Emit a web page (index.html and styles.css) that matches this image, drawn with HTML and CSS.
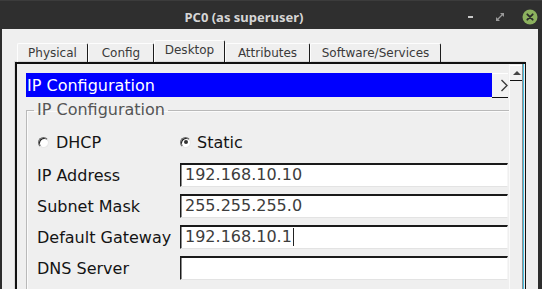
FILE: index.html
```html
<!DOCTYPE html>
<html lang="en">
<head>
    <meta charset="UTF-8">
    <title>PC0 (as superuser)</title>
    <link rel="stylesheet" href="styles.css">
</head>
<body>
    <div class="titlebar">
        <div class="title">PC0 (as superuser)</div>
        <div class="controls">
            <span class="min"></span>
            <svg class="max" width="8" height="8" viewBox="0 0 8 8">
                <path d="M4 0H8V4Z M0 4V8H4Z" fill="#9a9a9a"/>
                <path d="M1 7L7 1" stroke="#9a9a9a" stroke-width="1.2"/>
            </svg>
            <span class="close">
                <svg width="16" height="16" viewBox="0 0 16 16">
                    <circle cx="8" cy="8" r="7.5" fill="#8cb15e"/>
                    <path d="M5.3 5.3L10.7 10.7M10.7 5.3L5.3 10.7" stroke="#2a2a2a" stroke-width="1.8" stroke-linecap="round"/>
                </svg>
            </span>
        </div>
    </div>

    <div class="window">
        <div class="tabs">
            <div class="tab w-physical">Physical</div>
            <div class="tab w-config">Config</div>
            <div class="tab w-desktop active">Desktop</div>
            <div class="tab w-attr">Attributes</div>
            <div class="tab w-soft">Software/Services</div>
        </div>

        <div class="panel">
            <div class="view">
                <div class="bar-row">
                    <div class="bar">IP Configuration</div>
                    <div class="more">
                        <svg width="16" height="24" viewBox="0 0 16 24">
                            <path d="M9.5 7L15 12.5L9.5 18" fill="none" stroke="#3b3b3b" stroke-width="1.4"/>
                        </svg>
                    </div>
                </div>

                <fieldset class="group">
                    <legend>IP Configuration</legend>
                    <div class="form">
                        <label class="opt"><span class="radio"></span>DHCP</label>
                        <label class="opt"><span class="radio on"></span>Static</label>

                        <label>IP Address</label>
                        <div class="field">192.168.10.10</div>

                        <label>Subnet Mask</label>
                        <div class="field">255.255.255.0</div>

                        <label>Default Gateway</label>
                        <div class="field">192.168.10.1<span class="caret"></span></div>

                        <label>DNS Server</label>
                        <div class="field"></div>
                    </div>
                </fieldset>
            </div>
            <div class="scrollbar">
                <div class="up"></div>
            </div>
        </div>
    </div>
</body>
</html>
```

FILE: styles.css
```css
*{
    margin: 0;
    box-sizing: border-box;
}
html, body{
    height: 289px;
    overflow: hidden;
}
body{
    background-color: #2d2d2d;
    font-family: "DejaVu Sans", sans-serif;
}

/* window title */
.titlebar{
    height: 29px;
    display: flex;
    align-items: center;
    background-color: #2f2f2f;
    border-top: 1px solid #3c3c3c;
}
.title{
    flex: 1;
    padding-left: 20px;
    padding-top: 3px;
    text-align: center;
    font-family: "Noto Sans", sans-serif;
    font-weight: bold;
    font-size: 13px;
    color: #d6d6d6;
}
.controls{
    display: flex;
    align-items: center;
    padding-top: 3px;
    padding-right: 4px;
}
.min{
    width: 5px;
    height: 2px;
    background-color: #c8c8c8;
    margin-right: 23px;
}
.max{
    display: block;
    margin-right: 18px;
}
.close svg{
    display: block;
}

/* window body */
.window{
    margin: 0 4px 0 2px;
    height: 260px;
    background-color: #efefef;
    padding: 11px 0 0 13px;
}

.tabs{
    display: flex;
    align-items: flex-end;
    height: 22px;
    padding-left: 2px;
}
.tab{
    height: 19px;
    font-size: 12px;
    line-height: 18px;
    color: #3a3a3a;
    text-align: center;
    border-top: 1px solid #fdfdfd;
    border-left: 1px solid #fdfdfd;
    border-right: 1px solid #1c1c1c;
    border-radius: 2px 2px 0 0;
}
.tab.active{
    height: 22px;
    line-height: 18px;
}
.w-physical{ width: 71px; }
.w-config{ width: 66px; }
.w-desktop{ width: 71px; }
.w-attr{ width: 85px; }
.w-soft{ width: 131px; }

.panel{
    display: flex;
    width: 511px;
    height: 240px;
    border-top: 2px solid #111;
    border-left: 2px solid #111;
    border-right: 1px solid #111;
    padding-right: 2px;
    box-shadow: -1px -1px 0 #dadada;
}

.view{
    width: 492px;
    overflow: hidden;
    padding: 9px 0 0 9px;
}

.bar-row{
    display: flex;
    height: 25px;
}
.bar{
    width: 466px;
    height: 24px;
    background-color: #0000ff;
    color: #fff;
    font-size: 16px;
    line-height: 25px;
    padding-left: 1px;
}
.more{
    width: 16px;
    height: 25px;
    overflow: hidden;
    background-color: #f2f2f2;
    border-top: 1px solid #fff;
    border-bottom: 1px solid #111;
}
.more svg{
    display: block;
    margin-top: -1px;
}

.group{
    width: 520px;
    margin-top: 2px;
    padding: 0 0 20px 7px;
    border: 1px solid #b9b9b9;
    box-shadow: inset 1px 1px 0 #fbfbfb;
}
.group legend{
    padding: 0 3px;
    font-size: 16px;
    line-height: 20px;
    color: #555;
}

.form{
    display: grid;
    grid-template-columns: 143px 328px;
    row-gap: 7px;
    margin-top: 12px;
    padding-left: 3px;
    font-size: 16px;
    color: #141414;
}
.form label{
    display: flex;
    align-items: center;
    height: 24px;
}
.form .opt{
    height: 20px;
    margin-bottom: 4px;
}

.radio{
    width: 11px;
    height: 11px;
    margin: 0 7px 0 1px;
    border-radius: 50%;
    background-color: #fff;
    border: 1px solid;
    border-color: #6a6a6a #e8e8e8 #e8e8e8 #6a6a6a;
    box-shadow: inset 1px 1px 0 #222;
    display: flex;
    align-items: center;
    justify-content: center;
}
.opt + .opt .radio{
    margin-left: 0;
    margin-right: 6px;
}
.radio.on::after{
    content: "";
    width: 4px;
    height: 4px;
    border-radius: 50%;
    background-color: #333;
}

.field{
    height: 24px;
    background-color: #fff;
    border-style: solid;
    border-width: 2px 1px 1px 1px;
    border-color: #1a1a1a #f6f6f6 #e3e3e3 #1a1a1a;
    box-shadow: inset 1px 0 0 #8a8a8a;
    padding-left: 4px;
    line-height: 20px;
    color: #3d3d3d;
    white-space: nowrap;
}
.caret{
    display: inline-block;
    width: 1px;
    height: 18px;
    margin-left: 1px;
    vertical-align: -4px;
    background-color: #222;
}

/* scroll bar */
.scrollbar{
    width: 14px;
    border-left: 1px solid #fafafa;
    border-right: 1px solid #8e8e8e;
    background-color: #efefef;
    box-shadow: 1px 0 0 #45c0e4;
    padding-top: 1px;
}
.up{
    height: 16px;
    border-top: 1px solid #fff;
    border-bottom: 1px solid #111;
    background-color: #f2f2f2;
    position: relative;
}
.up::after{
    content: "";
    position: absolute;
    left: 3px;
    top: 5px;
    border-left: 4px solid transparent;
    border-right: 4px solid transparent;
    border-bottom: 4px solid #444;
}
```
